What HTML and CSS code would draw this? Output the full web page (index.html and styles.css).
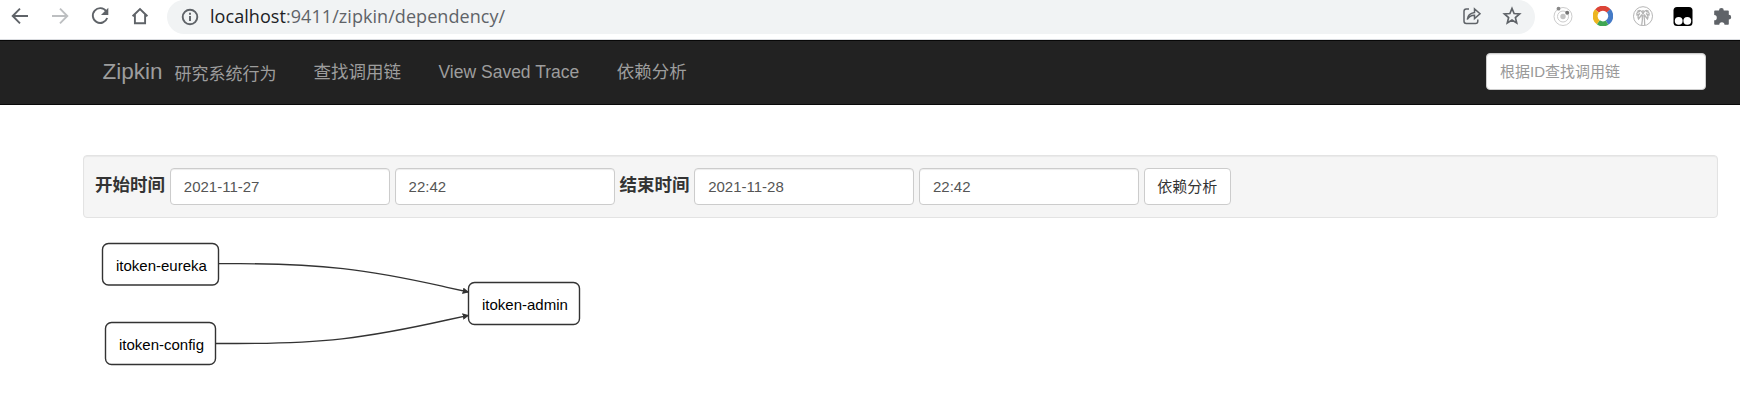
FILE: index.html
```html
<!DOCTYPE html>
<html lang="zh-CN">
<head>
<meta charset="utf-8">
<title>Zipkin</title>
<link rel="stylesheet" href="styles.css">
</head>
<body>
<div class="toolbar">
  <div class="nav-buttons">
    <svg class="icon" viewBox="0 0 20 20"><path d="M18 10H3M10 2.7 2.7 10l7.3 7.3"/></svg>
    <svg class="icon muted" viewBox="0 0 20 20"><path d="M2 10h15M10 2.7l7.3 7.3-7.3 7.3"/></svg>
    <svg class="icon" viewBox="0 0 20 20"><path d="M16.2 5.2A7.4 7.4 0 1 0 17.2 12"/><path class="solid" d="M18.3 1.8v7.3H11z"/></svg>
    <svg class="icon" viewBox="0 0 20 20"><path d="M2.6 10.3 10 3l7.4 7.3M4.9 8.5v8.7h10.2V8.5"/></svg>
  </div>
  <div class="address">
    <svg class="icon info" viewBox="0 0 20 20"><circle cx="10" cy="10" r="7.3"/><path d="M10 9v5M10 5.8v2"/></svg>
    <div class="url"><span class="host">localhost</span>:9411/zipkin/dependency/</div>
    <svg class="icon share" viewBox="0 0 20 20"><path d="M7 3H4.3Q2 3 2 5.300V15.300Q2 17.500 4.300 17.500h9.200q2.300 0 2.300-2.300V13.500"/><path d="M5.300 13.500q.5-6 7.200-7V3L18 7.800l-5.500 4.700V9.200Q7.800 9 5.300 13.500z"/></svg>
    <svg class="icon star" viewBox="0 0 20 20"><path d="m10 2.500 2.100 5 5.500.5-4.200 3.600 1.300 5.400-4.700-2.900L5.300 17l1.300-5.400L2.400 8l5.500-.5z"/></svg>
  </div>
  <div class="extensions">
    <svg viewBox="0 0 20 20"><g fill="none" stroke="#ccc"><circle cx="10" cy="10.500" r="9"/><circle cx="10" cy="10.500" r="5.500"/></g><circle cx="10" cy="10.500" r="2.700" fill="#c4c4c4"/><circle cx="5.500" cy="2.700" r="1.900" fill="#888"/><circle cx="14.200" cy="6.800" r="2" fill="#777"/></svg>
    <svg viewBox="0 0 20 20"><g fill="none" stroke-width="5"><path stroke="#dc4437" d="M4 5A7.700 7.700 0 0 1 15.700 4.800"/><path stroke="#447ac6" d="M15.700 4.800A7.700 7.700 0 0 1 14 16.600"/><path stroke="#3fa653" d="M14 16.600A7.700 7.700 0 0 1 5.300 16.300"/><path stroke="#edb51f" d="M5.300 16.300A7.700 7.700 0 0 1 4 5"/></g></svg>
    <svg viewBox="0 0 20 20"><g fill="none" stroke="#b5b5b5"><circle cx="10" cy="10.200" r="9.500"/><path stroke-width="1.300" d="M8.700 19q1-5 .6-10.500M11.700 19q0-6-1-10.500M10 8Q8 3 5 5l2 .7Q3 6 4 9l3-1.500Q4 10 5.500 13L9 8.500M10 8q2-5 5-3l-2 .7q4 .3 3 3.300l-3-1.500q3 2.500 1.500 5.500L11 8.500M10 8V4"/></g></svg>
    <svg viewBox="0 0 20 20"><rect x=".5" y="1" width="19" height="19" rx="3.500"/><circle cx="5.700" cy="14.800" r="3.900" fill="#fff"/><circle cx="14.300" cy="14.800" r="3.900" fill="#fff"/></svg>
    <svg viewBox="0 0 20 20"><path fill="#5f6368" d="M2 4.500h4a2.400 2.400 0 0 1 4.800 0h4.200q.8 0 .8.800v3.500a2.400 2.400 0 0 1 0 4.800V18q0 .8-.8.800h-3.500a2.600 2.600 0 0 0-5.200 0H2q-.8 0-.8-.8v-3.700a2.600 2.600 0 0 0 0-5.200V5.300q0-.8.800-.8z"/></svg>
  </div>
</div>
<nav class="navbar">
  <a class="brand">Zipkin</a>
  <span class="tagline">研究系统行为</span>
  <a class="nav-link">查找调用链</a>
  <a class="nav-link">View Saved Trace</a>
  <a class="nav-link">依赖分析</a>
  <input class="field search" type="text" placeholder="根据ID查找调用链">
</nav>
<main class="content">
  <form class="filters">
    <label class="label">开始时间</label>
    <input class="field" type="text" value="2021-11-27">
    <input class="field" type="text" value="22:42">
    <label class="label">结束时间</label>
    <input class="field" type="text" value="2021-11-28">
    <input class="field" type="text" value="22:42">
    <button class="button" type="button">依赖分析</button>
  </form>
  <svg class="graph" viewBox="83 218 1635 180">
    <defs><marker id="arrow" viewBox="0 0 10 10" refX="9" refY="5" markerWidth="6.500" markerHeight="6.500" preserveAspectRatio="none" markerUnits="userSpaceOnUse" orient="auto"><path d="M0 0 10 5 0 10z" fill="#333"/></marker></defs>
    <g class="edge">
      <path marker-end="url(#arrow)" d="M219 263.700h21C260 263.700 302 264 343 268.700C385 273.300 426 282.700 447 287.300L468.500 292"/>
      <path marker-end="url(#arrow)" d="M216 343.500h21C258 343.500 300 343.500 342 338.800C384 334 426 324.700 447 320L468.500 315.300"/>
    </g>
    <g class="node">
      <rect x="102.500" y="243.500" width="116" height="41.500" rx="6"/>
      <rect x="105.500" y="322.500" width="110" height="42" rx="6"/>
      <rect x="468.500" y="282.500" width="111" height="42" rx="6"/>
    </g>
    <g class="node-label">
      <text x="116" y="271">itoken-eureka</text>
      <text x="119" y="350">itoken-config</text>
      <text x="482" y="310">itoken-admin</text>
    </g>
  </svg>
</main>
</body>
</html>
```
FILE: styles.css
```css
* { box-sizing: border-box; }
body {
  margin: 0;
  height: 410px;
  overflow: hidden;
  background: #fff;
  color: #333;
  font-family: "Liberation Sans", "Noto Sans CJK SC", sans-serif;
  font-size: 17.5px;
}
svg { display: block; flex: none; }
.toolbar {
  display: flex;
  height: 40px;
  border-bottom: 1px solid #dadce0;
}
.nav-buttons {
  display: flex;
  gap: 20px;
  width: 167px;
  padding: 6px 0 0 9.5px;
}
.icon {
  width: 20px;
  height: 20px;
  fill: none;
  stroke: #5f6368;
  stroke-width: 1.9;
}
.muted { stroke: #bdbfc1; }
.solid { fill: #5f6368; stroke: none; }
.address {
  display: flex;
  align-items: flex-start;
  width: 1368px;
  height: 34px;
  padding: 6px 13px 0 12.5px;
  background: #f1f3f4;
  border-radius: 17px;
}
.info { margin: .5px 10.5px 0 0; }
.url {
  flex: 1;
  height: 24px;
  margin-top: -2px;
  line-height: 24px;
  font-family: "Open Sans", "Noto Sans", sans-serif;
  font-size: 18px;
  letter-spacing: .06px;
  color: #5f6368;
  white-space: nowrap;
}
.host { color: #202124; }
.share { margin-right: 20px; stroke-width: 1.5; }
.star { stroke-width: 1.7; }
.extensions {
  display: flex;
  gap: 20px;
  padding: 6px 0 0 17.5px;
}
.extensions svg { width: 20px; height: 20px; }
.navbar {
  display: flex;
  height: 65px;
  padding: 0 34px 0 102.5px;
  background: #222;
  border-top: 1px solid #080808;
  border-bottom: 1px solid #080808;
  color: #9d9d9d;
  line-height: 62px;
  white-space: nowrap;
}
.brand { font-size: 22.5px; width: 72px; }
.tagline { font-size: 17px; width: 139px; line-height: 67px; }
.nav-link { margin-right: 37.5px; }
.field {
  width: 220px;
  height: 37px;
  padding: 0 13px;
  border: 1px solid #ccc;
  border-radius: 4px;
  background: #fff;
  box-shadow: inset 0 1px 1px rgba(0, 0, 0, .075);
  color: #555;
  font: 15px "Liberation Sans", "Noto Sans CJK SC", sans-serif;
}
.search { margin: 12px 0 0 auto; }
.search::placeholder { color: #999; }
.content { padding: 50px 22px 0 83px; }
.filters {
  display: flex;
  gap: 4.8px;
  height: 63px;
  padding: 12px 11px;
  background: #f5f5f5;
  border: 1px solid #e3e3e3;
  border-radius: 4px;
  box-shadow: inset 0 1px 1px rgba(0, 0, 0, .05);
}
.label { width: 70px; font-weight: 700; line-height: 35px; white-space: nowrap; }
.button {
  width: 87px;
  height: 37px;
  padding: 0 0 3px;
  border: 1px solid #ccc;
  border-radius: 4px;
  background: #fff;
  color: #333;
  font: 15px "Liberation Sans", "Noto Sans CJK SC", sans-serif;
}
.graph { width: 1635px; height: 180px; }
.edge path { fill: none; stroke: #333; stroke-width: 1.3; }
.node rect { fill: #fff; stroke: #333; stroke-width: 1.4; }
.node-label { font-size: 15px; fill: #000; }
```
